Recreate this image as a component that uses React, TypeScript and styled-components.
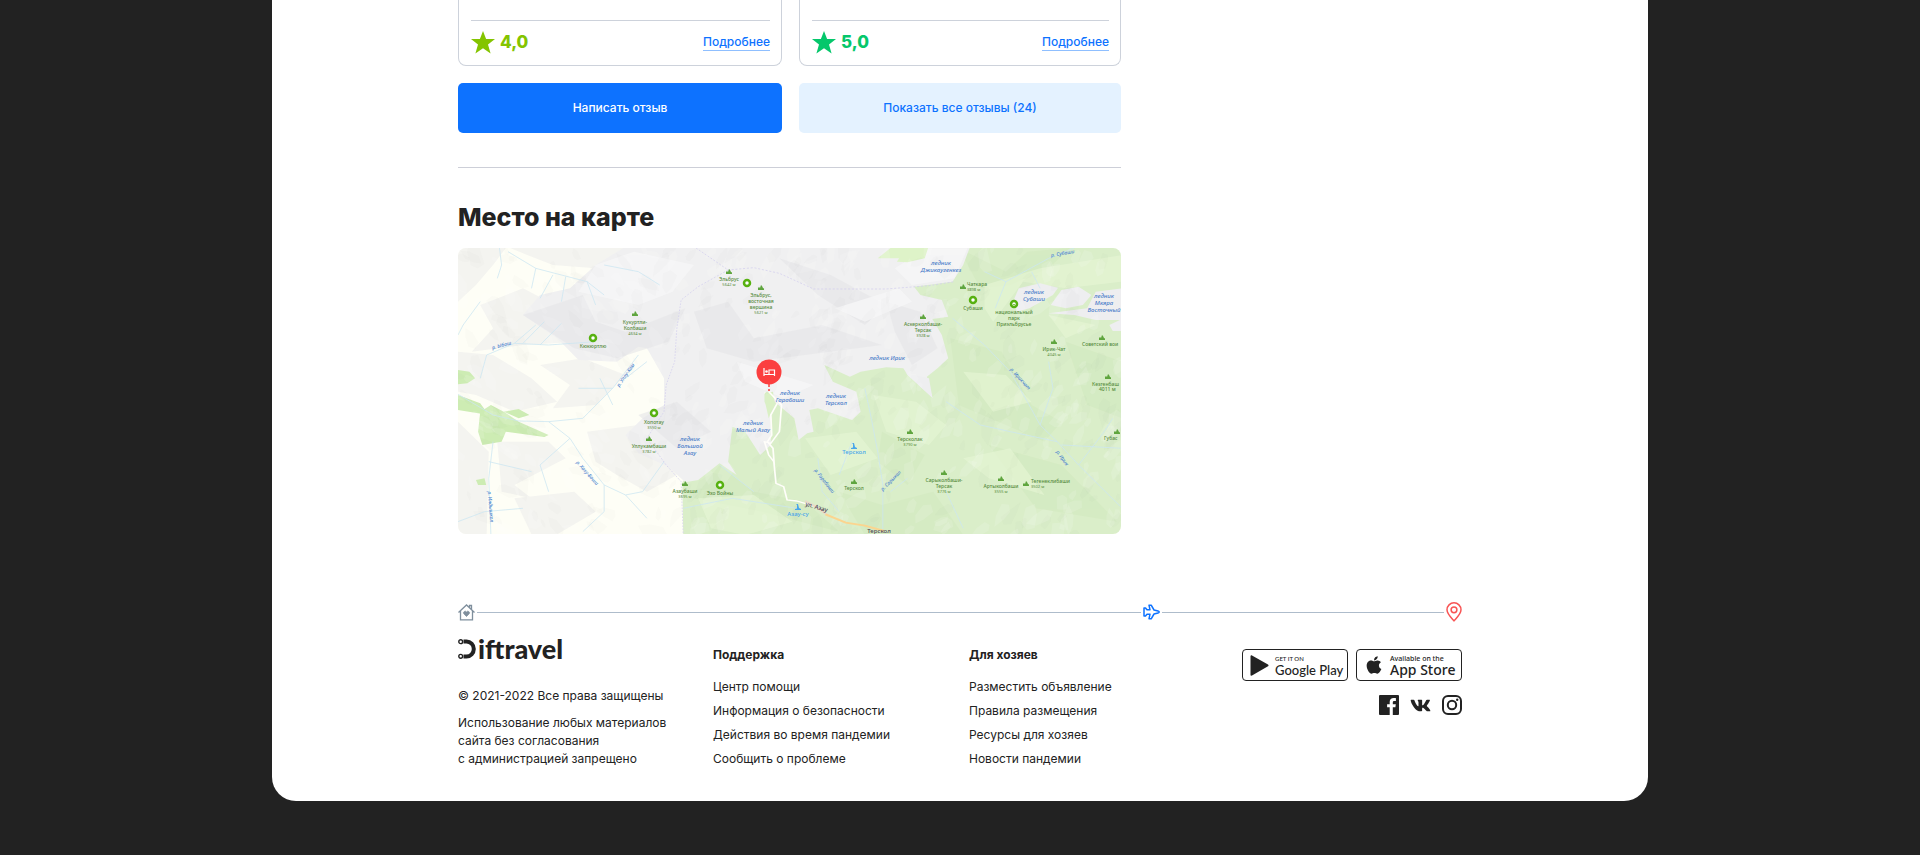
import React from "react";
import styled, { createGlobalStyle } from "styled-components";
import { FaApple, FaVk } from "react-icons/fa";

const GlobalStyle = createGlobalStyle`
  * { box-sizing: border-box; }
  body {
    margin: 0;
    background: #222;
    color: #222;
    font-family: Inter, "Liberation Sans", sans-serif;
    font-size: 12px;
    line-height: 18px;
  }
  a { color: inherit; text-decoration: none; }
  h2, h3, p, ul { margin: 0; padding: 0; }
`;

const Page = styled.div`
  padding-bottom: 54px;
`;

const Sheet = styled.div`
  max-width: 1376px;
  margin: 0 auto;
  padding: 0 24px 30px;
  background: #fff;
  border-radius: 0 0 24px 24px;
`;

const Container = styled.div`
  max-width: 1004px;
  margin: 0 auto;
`;

const Main = styled.main`
  max-width: 663px;
`;

const Pair = styled.div`
  display: grid;
  grid-template-columns: 324fr 322fr;
  column-gap: 17px;
  margin-bottom: 17px;
`;

const ReviewCard = styled.article`
  padding: 20px 11px 2px 12px;
  border: 1px solid #cdd2db;
  border-top: 0;
  border-radius: 0 0 8px 8px;
`;

const ReviewFooter = styled.div`
  display: flex;
  align-items: center;
  justify-content: space-between;
  height: 43px;
  border-top: 1px solid #cdd2db;
`;

const Rating = styled.div<{ $color: string }>`
  display: flex;
  align-items: center;
  gap: 5px;
  color: ${(p) => p.$color};
  font-size: 17px;
  font-weight: 800;
`;

const MoreLink = styled.a`
  color: #0d72ff;
  line-height: 16px;
  font-size: 12px;
  font-weight: 500;
  border-bottom: 1px solid #8fbfff;
`;

const ActionButton = styled.button<{ $primary?: boolean }>`
  height: 50px;
  border: 0;
  border-radius: 5px;
  background: ${(p) => (p.$primary ? "#0d72ff" : "#e4f2ff")};
  color: ${(p) => (p.$primary ? "#fff" : "#0d72ff")};
  font: inherit;
  font-weight: 500;
  cursor: pointer;
`;

const Divider = styled.hr`
  height: 1px;
  margin: 34px 0;
  border: 0;
  background: #cdcfd8;
`;

const Title = styled.h2`
  margin-bottom: 16px;
  font-size: 25px;
  line-height: 30px;
  font-weight: 800;
`;

const MapFrame = styled.div`
  overflow: hidden;
  border-radius: 8px;
  svg { display: block; width: 100%; height: auto; }
`;

const Route = styled.div`
  display: flex;
  align-items: center;
  gap: 2px;
  height: 20px;
  margin-top: 68px;
`;

const RouteLine = styled.div<{ $grow: number }>`
  flex: ${(p) => p.$grow} 1 0;
  height: 1px;
  background: #aebccb;
`;

const Footer = styled.footer`
  display: grid;
  grid-template-columns: 255px 256px 1fr auto;
  padding-top: 15px;
`;

const About = styled.div`
  p { margin-top: 9px; }
`;

const Logo = styled.a`
  display: flex;
  align-items: center;
  height: 24px;
  margin-bottom: 26px;
  gap: 2px;
  font-family: Lato, sans-serif;
  font-size: 27px;
  font-weight: 900;
`;

const LinkColumn = styled.nav`
  padding-top: 9px;
  h3 { margin-bottom: 11px; font-size: 12px; font-weight: 700; }
  ul { list-style: none; }
  li { line-height: 24px; }
`;

const Apps = styled.div`
  padding-top: 12px;
`;

const Badges = styled.div`
  display: flex;
  gap: 8px;
`;

const StoreBadge = styled.a`
  display: flex;
  align-items: center;
  gap: 6px;
  width: 106px;
  height: 32px;
  padding-left: 7px;
  border: 1px solid #222;
  border-radius: 4px;
  white-space: nowrap;
`;

const StoreText = styled.span<{ $family: string }>`
  display: flex;
  flex-direction: column;
  font-family: ${(p) => p.$family}, sans-serif;
`;

const StoreNote = styled.small<{ $size: number }>`
  font-size: ${(p) => p.$size}px;
  line-height: 9px;
  font-weight: 500;
`;

const StoreName = styled.strong<{ $size: number }>`
  font-size: ${(p) => p.$size}px;
  line-height: 14px;
  font-weight: 500;
`;

const Social = styled.div`
  display: flex;
  justify-content: flex-end;
  gap: 11px;
  margin-top: 14px;
  a { display: flex; align-items: center; height: 20px; }
`;

const Star = () => (
  <svg width="24" height="23" viewBox="0 0 24 23" fill="currentColor" aria-hidden="true">
    <path d="M12 0l3.100 8H24l-7 5.500 2.600 8.900L12 17.300l-7.600 5.100L7 13.500 0 8h8.900z" />
  </svg>
);

const Review = ({ score, color }: { score: string; color: string }) => (
  <ReviewCard>
    <ReviewFooter>
      <Rating $color={color}>
        <Star />
        {score}
      </Rating>
      <MoreLink href="#review">Подробнее</MoreLink>
    </ReviewFooter>
  </ReviewCard>
);

/* ---------- map ---------- */

type Kind = "peak" | "glacier" | "river" | "lift" | "town";
type Place = {
  x: number;
  y: number;
  lines: string[];
  kind?: Kind;
  height?: string;
  rotate?: number;
  start?: boolean;
};

const colors: Record<Kind, string> = {
  peak: "#568b3d",
  glacier: "#4a7cc9",
  river: "#4a82cf",
  lift: "#49a6ea",
  town: "#4d4654",
};

const places: Place[] = [
  { x: 271, y: 33, lines: ["Эльбрус"], height: "5642 м" },
  { x: 303, y: 49, lines: ["Эльбрус,", "восточная", "вершина"], height: "5621 м" },
  { x: 177, y: 76, lines: ["Кукуртли-", "Колбаши"], height: "4634 м" },
  { x: 135, y: 100, lines: ["Кюкюртлю"] },
  { x: 196, y: 176, lines: ["Хопотау"], height: "3550 м" },
  { x: 191, y: 200, lines: ["Уллукамбаши"], height: "3782 м" },
  { x: 227, y: 245, lines: ["Азаубаши"], height: "3695 м" },
  { x: 262, y: 247, lines: ["Эхо Войны"] },
  { x: 509, y: 38, lines: ["Чаткара"], height: "3898 м", start: true },
  { x: 515, y: 62, lines: ["Субаши"] },
  { x: 556, y: 66, lines: ["национальный", "парк", "Приэльбрусье"] },
  { x: 465, y: 78, lines: ["Аскерколбаши-", "Терсак"], height: "3928 м" },
  { x: 596, y: 103, lines: ["Ирик-Чат"], height: "4045 м" },
  { x: 624, y: 98, lines: ["Советский вои"], start: true },
  { x: 634, y: 138, lines: ["Кезгенбаш"], start: true },
  { x: 641, y: 143, lines: ["4011 м"], start: true },
  { x: 452, y: 193, lines: ["Терсколак"], height: "3790 м" },
  { x: 646, y: 192, lines: ["Губас"], start: true },
  { x: 486, y: 234, lines: ["Сарыколбаши-", "Терсак"], height: "3776 м" },
  { x: 543, y: 240, lines: ["Артыколбаши"], height: "3555 м" },
  { x: 573, y: 235, lines: ["Тегенеклибаши"], height: "3502 м", start: true },
  { x: 396, y: 242, lines: ["Терскол"] },
  { x: 232, y: 193, lines: ["ледник", "Большой", "Азау"], kind: "glacier" },
  { x: 295, y: 177, lines: ["ледник", "Малый Азау"], kind: "glacier" },
  { x: 332, y: 147, lines: ["ледник", "Гарабаши"], kind: "glacier" },
  { x: 378, y: 150, lines: ["ледник", "Терскол"], kind: "glacier" },
  { x: 429, y: 112, lines: ["ледник Ирик"], kind: "glacier" },
  { x: 483, y: 17, lines: ["ледник", "Джикаугенкез"], kind: "glacier" },
  { x: 576, y: 46, lines: ["ледник", "Субаши"], kind: "glacier" },
  { x: 646, y: 50, lines: ["ледник", "Мкяра", "Восточный"], kind: "glacier" },
  { x: 44, y: 99, lines: ["р. Ыбаш"], kind: "river", rotate: -15 },
  { x: 169, y: 128, lines: ["р. Уллу-Кам"], kind: "river", rotate: -55 },
  { x: 128, y: 226, lines: ["р. Хаху-Баши"], kind: "river", rotate: 48 },
  { x: 31, y: 259, lines: ["р. Индышкол"], kind: "river", rotate: 85 },
  { x: 605, y: 7, lines: ["р. Субаши"], kind: "river", rotate: -10 },
  { x: 561, y: 132, lines: ["р. Ирикчат"], kind: "river", rotate: 48 },
  { x: 603, y: 211, lines: ["р. Ирик"], kind: "river", rotate: 54 },
  { x: 365, y: 234, lines: ["р. Гарабаши"], kind: "river", rotate: 52 },
  { x: 434, y: 234, lines: ["р. Сарыкол"], kind: "river", rotate: -45 },
  { x: 396, y: 206, lines: ["Терскол"], kind: "lift" },
  { x: 340, y: 268, lines: ["Азау-су"], kind: "lift" },
  { x: 358, y: 261, lines: ["ул. Азау"], kind: "town", rotate: 16 },
  { x: 421, y: 285, lines: ["Терскол"], kind: "town" },
];

const rings = [[289, 35], [135, 90], [196, 165], [262, 237], [515, 52], [556, 56]];
const peaks = [
  [271, 24], [303, 40], [177, 66], [191, 191], [227, 236], [505, 39], [465, 69], [596, 94],
  [644, 90], [650, 129], [452, 184], [659, 184], [486, 225], [543, 231], [568, 236], [396, 234],
];
const lifts = [[396, 198], [340, 259]];

/* Relief facets: small slanted patches from a fixed pseudo-random sequence. */
const facets = (() => {
  let seed = 11;
  const next = () => {
    seed = (seed * 16807) % 2147483647;
    return seed / 2147483647;
  };
  return Array.from({ length: 620 }, () => {
    const cx = next() * 663;
    const cy = next() * 286;
    const size = 5 + next() * 12;
    const tilt = next() * 1.2 + (cx < 200 ? 0.2 : 1.5);
    const points = Array.from({ length: 6 }, (_, i) => {
      const a = (i / 6) * Math.PI * 2;
      const r = size * (0.5 + next() * 0.6);
      const px = Math.cos(a) * r;
      const py = Math.sin(a) * r * 0.5;
      const rx = px * Math.cos(tilt) - py * Math.sin(tilt);
      const ry = px * Math.sin(tilt) + py * Math.cos(tilt);
      return `${(cx + rx).toFixed(1)},${(cy + ry).toFixed(1)}`;
    });
    return { points: points.join(" "), light: next() > 0.5 };
  });
})();

const Label = ({ x, y, lines, kind = "peak", height, rotate, start }: Place) => {
  const size = kind === "peak" || kind === "river" ? 5 : 6;
  const step = size + 1;
  return (
    <text
      x={x}
      y={y}
      fill={colors[kind]}
      fontFamily='"Noto Sans", sans-serif'
      fontSize={size}
      fontWeight={500}
      fontStyle={kind === "glacier" || kind === "river" ? "italic" : "normal"}
      textAnchor={start ? "start" : "middle"}
      transform={rotate ? `rotate(${rotate} ${x} ${y})` : undefined}
    >
      {lines.map((line, i) => (
        <tspan key={line} x={x} y={y + i * step}>{line}</tspan>
      ))}
      {height && (
        <tspan x={x} y={y + lines.length * step - 1} fontSize={4} fontWeight={400}>{height}</tspan>
      )}
    </text>
  );
};

const TerrainMap = () => (
  <svg viewBox="0 0 663 286" role="img" aria-label="Карта окрестностей Эльбруса">
    <rect width="663" height="286" fill="#fefef6" />
    <g transform="scale(.4274 .3333) translate(-8 -9)">
      <g fill="#f4f4f0">
        <path d="M8 9H120L90 60 50 120 8 170zM130 9H400L330 70 230 60 170 30z" />
        <path d="M60 180L160 130 250 190 290 290 160 300 40 320 90 250z" />
        <path d="M8 320L90 330 180 400 240 470 140 500 50 450 8 440z" />
        <path d="M200 360L300 340 400 390 330 480 230 490 270 420z" />
        <path d="M8 530L80 620 75 870H8z" />
        <path d="M100 590L220 590 260 640 140 720 180 760 110 740z" />
        <path d="M310 560L430 540 520 690 450 740 380 690 330 650z" />
        <path d="M140 760L280 740 330 800 240 868H180z" />
      </g>
      <path fill="#daeec9" d="M535 872L533 712 570 650 760 400 850 200 990 9H1562V872z" />
      <g fill="#cbe5b6" opacity=".3">
        <path d="M1180 10L1290 80 1340 20 1440 9 1390 70 1300 120 1230 130z" />
        <path d="M1160 280L1280 320 1350 480 1420 530 1380 590 1290 540 1180 480z" />
        <path d="M620 660L700 740 820 770 900 860 720 800 560 760z" />
        <path d="M1000 560L1100 630 1060 720 990 650zM1250 600L1420 660 1550 830 1360 790z" />
        <path d="M900 740L1000 780 1120 740 1190 870H960zM1430 290L1562 350V520L1480 480z" />
      </g>
      <g fill="#e6f6d5" opacity=".65">
        <path d="M1240 120L1370 70 1562 30V110L1430 130 1330 110 1260 230 1240 190z" />
        <path d="M980 450L1080 470 1150 540 1110 600 1010 560zM1190 380L1290 390 1350 470 1260 500z" />
        <path d="M820 580L940 560 990 640 880 690zM1190 640L1300 610 1380 750 1250 700z" />
        <path d="M570 760L700 750 790 830 680 870 600 850zM1390 210L1500 240 1430 280z" />
      </g>
      <path
        fill="#f0f0f1"
        d="M395 9H1205L1190 60 1165 110 1075 125 1090 150 1140 165 1155 215 1118 222 1140 270 1155 340 1130 370 1105 395 1118 458 1060 390 1050 370 1010 367 950 380 925 395 865 360 885 410 940 440 950 500 930 525 850 490 830 495 840 560 825 565 805 585 795 520 750 472 740 440 725 440 725 470 740 510 740 600 715 630 680 560 650 545 640 650 660 690 620 655 570 705 540 712 500 665 430 625 400 570 440 520 490 480 490 400 450 310 430 305 380 350 290 345 240 280 160 210 200 150 270 130 330 60z"
      />
      <g fill="#e6e6e8" opacity=".6">
        <path d="M160 210L300 150 330 230 400 260 540 190 500 290 380 340 280 310z" />
        <path d="M560 200L640 170 700 280 860 240 1000 300 820 330 700 350 590 310z" />
        <path d="M760 40L880 90 1010 180 960 240 850 150zM430 510L520 470 600 560 520 610z" />
        <path d="M1010 170L1090 200 1130 310 1070 360 1030 260z" />
      </g>
      <g fill="#f7f7f8" opacity=".8">
        <path d="M330 60L420 20 560 60 510 140 430 180 290 140z" />
        <path d="M890 190L1040 130 1070 170 960 230zM660 350L840 420 770 460 680 410z" />
        <path d="M1105 10L1200 10 1170 100 1070 120 1030 70z" />
      </g>
      <path fill="#def3c8" d="M990 40L1020 9H1108L1100 40 1060 52 1035 50 1040 40z" />
      <g fill="#eeeef0">
        <path d="M1320 130L1370 115 1412 128 1400 150 1345 190 1315 200 1310 160z" />
        <path d="M1395 180L1420 135 1460 125 1490 150 1470 180 1430 190zM1390 205L1480 190 1500 140 1562 130V225H1500L1450 210z" />
        <path d="M1532 240L1562 222V258L1540 258zM1056 385L1110 400 1118 458z" />
      </g>
      <g fill="#cdecb3">
        <path d="M8 375L35 380 48 400 30 415 8 418zM8 450L60 475 80 510 8 495z" />
        <path d="M60 500L85 480 115 500 150 530 220 570 210 576 120 560 110 590 65 600 55 560zM115 500L150 492 175 510 150 520z" />
        <path d="M50 705L70 700 74 720 55 720z" />
      </g>
      <path fill="#daf0c5" d="M727 445L745 440 748 475 735 520 728 480z" />
    </g>
    {facets.map((f, i) => (
      <polygon key={i} points={f.points} fill={f.light ? "#fff" : "#667"} opacity={f.light ? 0.13 : 0.02} />
    ))}
    <g transform="scale(.4274 .3333) translate(-8 -9)" fill="none">
      <g stroke="#cbe6f2" strokeWidth="2">
        <path d="M105 9L110 60 100 100M125 20L190 70 310 110 350 150M190 70L180 130M230 90L200 160M260 95L250 170M310 110L330 180M350 60L430 80 480 120" />
        <path d="M60 400L75 330 140 295 220 300 330 290M140 295L190 240M160 295L210 230M200 300L250 235M60 170L20 240 8 270" />
        <path d="M8 448L90 510 150 528 220 530 270 580 300 640 350 720 400 750 440 740 490 650M220 530L300 520 370 430 430 330M370 430L290 430M270 580L200 660 220 740" />
        <path d="M370 480L340 400M400 400L450 350M90 590L80 700 85 870M80 650L180 680M350 720L350 800 300 860M400 750L450 820M8 830L70 800 160 790" />
        <path d="M1165 220L1240 300 1300 380 1340 470 1370 540 1410 590 1460 660 1562 790M1410 590L1300 560 1230 540 1150 470M1370 540L1400 430 1390 350" />
        <path d="M1265 190L1290 110 1390 40 1450 9M1290 110L1240 80M1350 80L1370 130M960 430L975 520 990 620 1002 720 1002 860M850 640L860 740 900 800M930 590L900 690" />
        <path d="M535 790L650 760 800 790M620 660L700 740M1060 700L1020 740M1150 740L1190 850M1420 600L1562 610M1460 660L1520 560 1540 520" />
      </g>
      <path stroke="#d4d0ee" strokeWidth="2" strokeDasharray="5 4" d="M565 9L640 75 700 68 760 85 840 132H1010L1110 122 1170 110M640 75L570 125 530 165 520 250 515 350 495 420 490 500 450 580 495 660 530 710 535 870" />
      <path stroke="#fffefa" strokeWidth="4" d="M735 440L765 480 760 560 740 595 725 590 735 630 747 650 752 715 770 725 778 765 800 768 845 785M755 475L740 510 742 570 732 590 745 610 748 660" />
      <path stroke="#e8d9c9" strokeWidth="6" d="M820 768L845 785 875 812" />
      <path stroke="#fbd58f" strokeWidth="6" d="M868 808L915 833 960 842 1005 858" />
    </g>
    {peaks.map(([x, y]) => (
      <path key={`${x}-${y}`} transform={`translate(${x - 3} ${y - 3})`} fill="#5fa53e" d="M0 5V3L1 2l1 1 1-3 1 1 1 2 1 .500V5z" />
    ))}
    {rings.map(([x, y]) => (
      <circle key={`${x}-${y}`} cx={x} cy={y} r="3" fill="#fff" stroke="#57b110" strokeWidth="2.500" />
    ))}
    <path d="M555 57a1 1 0 0 1 2 0z" fill="#57b110" />
    {lifts.map(([x, y]) => (
      <path key={`${x}-${y}`} transform={`translate(${x - 3} ${y - 3})`} fill="#49a6ea" d="M0 6V5l2-.500V1L1 0h2l1 4 2 1v1z" />
    ))}
    {places.map((p) => (
      <Label key={`${p.x}-${p.y}`} {...p} />
    ))}
    <path d="M311 134v5M311 141v2" stroke="#fb3f3f" strokeWidth="1.500" />
    <circle cx="311" cy="124" r="12.500" fill="#fb3f3f" />
    <path d="M306 120v8M306 126.500h10.500M316.500 128v-6h-5.500v4.500" fill="none" stroke="#fff" strokeWidth="1.200" />
    <circle cx="308.500" cy="123.500" r="1.300" fill="#fff" />
  </svg>
);

/* ---------- footer drawings ---------- */

const HouseIcon = () => (
  <svg width="17" height="17" viewBox="0 0 17 17" fill="none" stroke="#7f8f9d" strokeWidth="1.300" aria-hidden="true">
    <path d="M.500 8.500L8.500 1l8 7.500M2.500 7v8.800h12V7M13.500 5.500V1.500h-2v2" />
    <path d="M8.500 12.500L5.700 9.600a1.500 1.500 0 0 1 2.800-1.500 1.500 1.500 0 0 1 2.800 1.500z" fill="#7f8f9d" stroke="#7f8f9d" strokeWidth=".800" />
  </svg>
);

const PlaneIcon = () => (
  <svg width="17" height="16" viewBox="0 0 17 16" fill="none" stroke="#0d72ff" strokeWidth="1.500" strokeLinejoin="round" aria-hidden="true">
    <path d="M1 4h1.500L4 5.800h3L6 1.200h2.200L11 6l4 .900c1 .300 1.200.700 1.200 1.100s-.200.800-1.200 1.100L11 10l-2.800 4.800H6l1-4.600H4L2.500 12H1z" />
  </svg>
);

const PinIcon = () => (
  <svg width="16" height="20" viewBox="0 0 16 20" fill="none" stroke="#f85555" strokeWidth="1.500" aria-hidden="true">
    <path d="M8 18.800C5.500 16 1 12 1 7.800a7 7 0 0 1 14 0C15 12 10.500 16 8 18.800z" />
    <circle cx="8" cy="7.800" r="2.900" />
  </svg>
);

const LogoMark = () => (
  <svg width="18" height="20" viewBox="0 0 18 20" fill="none" stroke="#222" aria-hidden="true">
    <path d="M5.500 2.500H8.500a7.300 7.500 0 0 1 0 15H5.500" strokeWidth="4" />
    <circle cx="2.700" cy="2.700" r="1.900" strokeWidth="1.400" fill="#fff" />
    <circle cx="2.700" cy="17.300" r="1.900" strokeWidth="1.400" fill="#fff" />
  </svg>
);

const PlayIcon = () => (
  <svg width="19" height="21" viewBox="0 0 19 21" fill="#222" aria-hidden="true">
    <path d="M.500 1.200C.500.300 1.300 0 2 .400L18 9.500c.700.400.700 1.400 0 1.800L2 20.600c-.700.400-1.500 0-1.500-.800z" />
  </svg>
);

const FacebookIcon = () => (
  <svg width="20" height="20" viewBox="0 0 20 20" fill="#222" aria-hidden="true">
    <path d="M1 0h18a1 1 0 0 1 1 1v18a1 1 0 0 1-1 1h-5.200v-7.700h2.600l.400-3h-3V7.400c0-.900.300-1.500 1.500-1.500h1.600V3.200c-.300 0-1.200-.1-2.300-.1-2.300 0-3.900 1.400-3.900 4v2.200H8.100v3h2.600V20H1a1 1 0 0 1-1-1V1a1 1 0 0 1 1-1z" />
  </svg>
);

const InstagramIcon = () => (
  <svg width="20" height="20" viewBox="0 0 20 20" fill="none" stroke="#222" strokeWidth="2" aria-hidden="true">
    <rect x="1" y="1" width="18" height="18" rx="5" />
    <circle cx="10" cy="10" r="4.200" />
    <circle cx="15.200" cy="4.800" r="1.200" fill="#222" stroke="none" />
  </svg>
);

const columns = [
  {
    title: "Поддержка",
    links: ["Центр помощи", "Информация о безопасности", "Действия во время пандемии", "Сообщить о проблеме"],
  },
  {
    title: "Для хозяев",
    links: ["Разместить объявление", "Правила размещения", "Ресурсы для хозяев", "Новости пандемии"],
  },
];

export default function App() {
  return (
    <Page>
      <GlobalStyle />
      <Sheet>
        <Container>
          <Main>
            <Pair>
              <Review score="4,0" color="#84c400" />
              <Review score="5,0" color="#05c76b" />
            </Pair>
            <Pair>
              <ActionButton $primary type="button">Написать отзыв</ActionButton>
              <ActionButton type="button">Показать все отзывы (24)</ActionButton>
            </Pair>
            <Divider />
            <Title>Место на карте</Title>
            <MapFrame>
              <TerrainMap />
            </MapFrame>
          </Main>
          <Route>
            <HouseIcon />
            <RouteLine $grow={666} />
            <PlaneIcon />
            <RouteLine $grow={283} />
            <PinIcon />
          </Route>
          <Footer>
            <About>
              <Logo href="#home" aria-label="Diftravel">
                <LogoMark />
                iftravel
              </Logo>
              <p>© 2021-2022 Все права защищены</p>
              <p>
                Использование любых материалов
                <br />
                сайта без согласования
                <br />с администрацией запрещено
              </p>
            </About>
            {columns.map((column) => (
              <LinkColumn key={column.title} aria-label={column.title}>
                <h3>{column.title}</h3>
                <ul>
                  {column.links.map((link) => (
                    <li key={link}>
                      <a href="#info">{link}</a>
                    </li>
                  ))}
                </ul>
              </LinkColumn>
            ))}
            <Apps>
              <Badges>
                <StoreBadge href="#google-play">
                  <PlayIcon />
                  <StoreText $family="Lato">
                    <StoreNote $size={6}>GET IT ON</StoreNote>
                    <StoreName $size={13}>Google Play</StoreName>
                  </StoreText>
                </StoreBadge>
                <StoreBadge href="#app-store">
                  <FaApple size={20} />
                  <StoreText $family='"Noto Sans"'>
                    <StoreNote $size={7}>Available on the</StoreNote>
                    <StoreName $size={14}>App Store</StoreName>
                  </StoreText>
                </StoreBadge>
              </Badges>
              <Social>
                <a href="#facebook" aria-label="Facebook"><FacebookIcon /></a>
                <a href="#vk" aria-label="ВКонтакте"><FaVk size={21} /></a>
                <a href="#instagram" aria-label="Instagram"><InstagramIcon /></a>
              </Social>
            </Apps>
          </Footer>
        </Container>
      </Sheet>
    </Page>
  );
}
